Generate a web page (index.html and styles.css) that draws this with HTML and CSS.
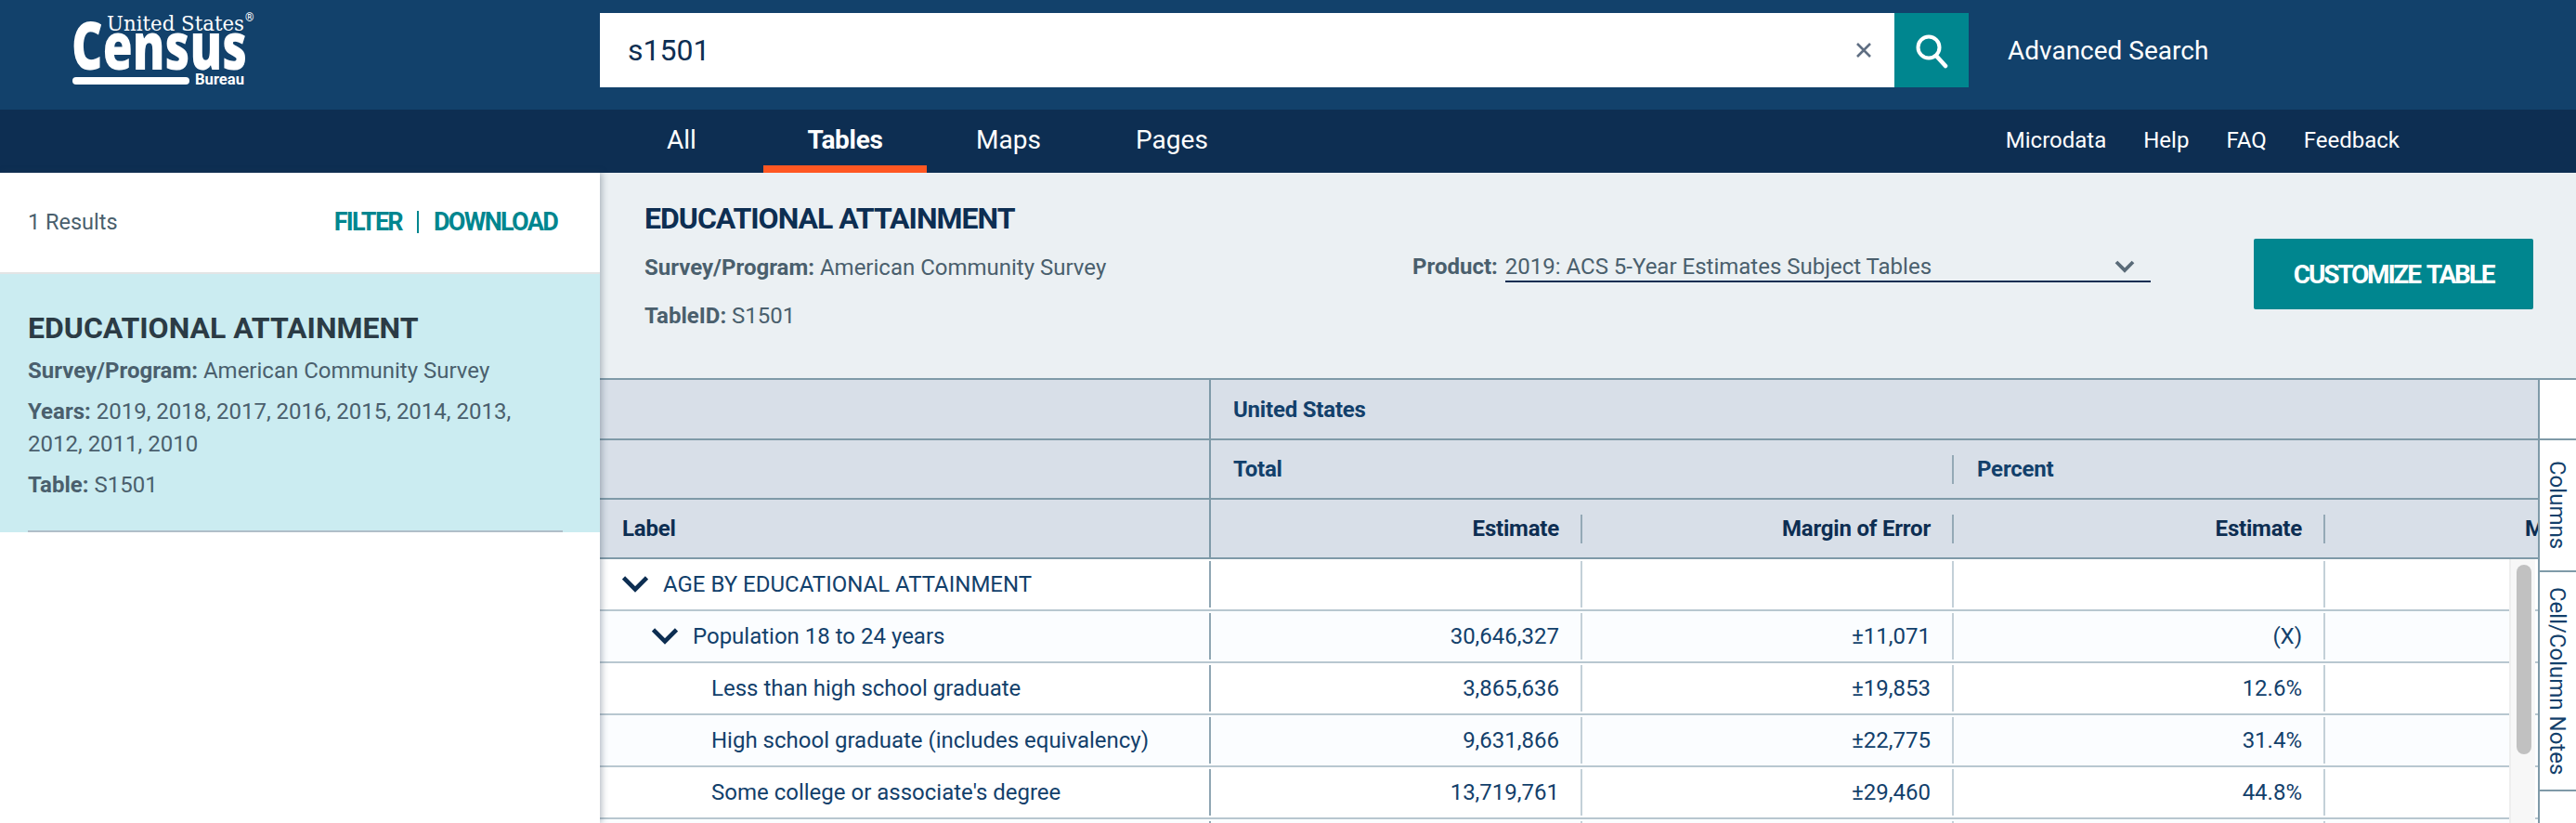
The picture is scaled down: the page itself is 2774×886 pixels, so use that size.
FILE: index.html
```html
<!DOCTYPE html>
<html>
<head>
    <title>Census Tables</title>
    <link rel="stylesheet" href="styles.css">
</head>
<body>
    <header class="top-bar">
        <a class="logo">
            <svg width="210" height="96" viewBox="0 0 210 96">
                <text x="37" y="33" class="logo-states" textLength="148" lengthAdjust="spacingAndGlyphs">United States</text>
                <text x="186" y="23" class="logo-reg">®</text>
                <text x="-1" y="75" class="logo-census" textLength="189" lengthAdjust="spacingAndGlyphs">Census</text>
                <rect x="0" y="83" width="126" height="8" rx="4" fill="#fff"></rect>
                <text x="132" y="91" class="logo-bureau" textLength="53" lengthAdjust="spacingAndGlyphs">Bureau</text>
            </svg>
        </a>
        <div class="search-box">
            <span class="search-text">s1501</span>
            <svg class="search-clear" width="18" height="18" viewBox="0 0 18 18"><path d="M2 2L16 16M16 2L2 16" stroke="#5f6e82" stroke-width="2.6" fill="none"></path></svg>
        </div>
        <button class="search-btn">
            <svg width="36" height="38" viewBox="0 0 36 38"><circle cx="15" cy="15" r="11.5" stroke="#fff" stroke-width="4" fill="none"></circle><path d="M23 24L33 35" stroke="#fff" stroke-width="4.6" stroke-linecap="round"></path></svg>
        </button>
        <a class="advanced">Advanced Search</a>
    </header>

    <nav class="nav-bar">
        <div class="tabs">
            <a class="tab">All</a>
            <a class="tab active">Tables</a>
            <a class="tab">Maps</a>
            <a class="tab">Pages</a>
        </div>
        <div class="nav-links">
            <a>Microdata</a>
            <a>Help</a>
            <a>FAQ</a>
            <a>Feedback</a>
        </div>
    </nav>

    <div class="layout">
        <aside class="sidebar">
            <div class="results-row">
                <span class="results-count">1 Results</span>
                <div class="results-actions">
                    <a>FILTER</a>
                    <span class="action-sep"></span>
                    <a>DOWNLOAD</a>
                </div>
            </div>
            <div class="result-card">
                <h2>EDUCATIONAL ATTAINMENT</h2>
                <p><b>Survey/Program:</b> American Community Survey</p>
                <p><b>Years:</b> 2019, 2018, 2017, 2016, 2015, 2014, 2013, 2012, 2011, 2010</p>
                <p><b>Table:</b> S1501</p>
            </div>
        </aside>

        <main class="content">
            <section class="table-info">
                <div class="info-left">
                    <h1>EDUCATIONAL ATTAINMENT</h1>
                    <p><b>Survey/Program:</b> American Community Survey</p>
                    <p><b>TableID:</b> S1501</p>
                </div>
                <div class="product">
                    <b>Product:</b>
                    <div class="product-select">
                        <span>2019: ACS 5-Year Estimates Subject Tables</span>
                        <svg width="22" height="14" viewBox="0 0 22 14"><path d="M2 2L11 11L20 2" stroke="#5a6b78" stroke-width="3.8" fill="none"></path></svg>
                    </div>
                </div>
                <button class="customize">CUSTOMIZE TABLE</button>
            </section>

            <section class="table-area">
                <div class="table-wrap">
                    <table class="data-table">
                        <colgroup>
                            <col class="col-label">
                            <col class="col-num">
                            <col class="col-num">
                            <col class="col-num">
                            <col class="col-num">
                        </colgroup>
                        <thead>
                            <tr class="head-geo">
                                <th class="head-first"></th>
                                <th colspan="4" class="head-group">United States</th>
                            </tr>
                            <tr class="head-sub">
                                <th class="head-first"></th>
                                <th colspan="2" class="head-group">Total</th>
                                <th colspan="2" class="head-percent"><div>Percent</div></th>
                            </tr>
                            <tr class="head-cols">
                                <th class="head-first head-label">Label</th>
                                <th class="head-num"><div>Estimate</div></th>
                                <th class="head-num"><div>Margin of Error</div></th>
                                <th class="head-num"><div>Estimate</div></th>
                                <th class="head-num"><div>Margin of Error</div></th>
                            </tr>
                        </thead>
                        <tbody>
                            <tr>
                                <td class="row-label level-0">
                                    <svg width="28" height="18" viewBox="0 0 28 18"><path d="M1.5 2L14 14.5L26.5 2" stroke="#0d2e52" stroke-width="4.6" fill="none"></path></svg>
                                    AGE BY EDUCATIONAL ATTAINMENT
                                </td>
                                <td></td><td></td><td></td><td></td>
                            </tr>
                            <tr>
                                <td class="row-label level-1">
                                    <svg width="28" height="18" viewBox="0 0 28 18"><path d="M1.5 2L14 14.5L26.5 2" stroke="#0d2e52" stroke-width="4.6" fill="none"></path></svg>
                                    Population 18 to 24 years
                                </td>
                                <td>30,646,327</td><td>±11,071</td><td>(X)</td><td></td>
                            </tr>
                            <tr>
                                <td class="row-label level-2">Less than high school graduate</td>
                                <td>3,865,636</td><td>±19,853</td><td>12.6%</td><td></td>
                            </tr>
                            <tr>
                                <td class="row-label level-2">High school graduate (includes equivalency)</td>
                                <td>9,631,866</td><td>±22,775</td><td>31.4%</td><td></td>
                            </tr>
                            <tr>
                                <td class="row-label level-2">Some college or associate's degree</td>
                                <td>13,719,761</td><td>±29,460</td><td>44.8%</td><td></td>
                            </tr>
                            <tr>
                                <td class="row-label level-2"></td>
                                <td></td><td></td><td></td><td></td>
                            </tr>
                        </tbody>
                    </table>
                    <div class="scroll-track"><div class="scroll-thumb"></div></div>
                </div>
                <div class="side-tabs">
                    <div class="side-blank"></div>
                    <div class="side-tab tab-columns"><span>Columns</span></div>
                    <div class="side-tab tab-notes"><span>Cell/Column Notes</span></div>
                </div>
            </section>
        </main>
    </div>
</body>
</html>
```

FILE: styles.css
```css
* {
    box-sizing: border-box;
}

html, body {
    margin: 0;
    height: 886px;
    overflow: hidden;
}

body {
    font-family: Roboto, sans-serif;
    background-color: #fff;
    color: #12406b;
}

h1, h2, p {
    margin: 0;
}

/* top bar */
.top-bar {
    height: 118px;
    background-color: #12416b;
    display: flex;
    align-items: flex-start;
    padding-left: 78px;
}

.logo {
    width: 568px;
    height: 96px;
}

.logo svg {
    overflow: visible;
}

.logo text {
    fill: #fff;
}

.logo-states {
    font-family: "DejaVu Serif", serif;
    font-size: 23px;
}

.logo-reg {
    font-family: Roboto, sans-serif;
    font-size: 12px;
}

.logo-census {
    font-family: "Open Sans", sans-serif;
    font-weight: 800;
    font-size: 70px;
}

.logo-bureau {
    font-family: Roboto, sans-serif;
    font-weight: 700;
    font-size: 16px;
}

.search-box {
    margin-top: 14px;
    width: 1394px;
    height: 80px;
    background-color: #fff;
    display: flex;
    align-items: center;
    justify-content: space-between;
    padding: 0 24px 0 30px;
}

.search-text {
    font-size: 32px;
    color: #0d2e52;
}

.search-btn {
    margin-top: 14px;
    width: 80px;
    height: 80px;
    background-color: #00868f;
    border: none;
    padding: 2px 0 0;
    display: flex;
    align-items: center;
    justify-content: center;
}

.advanced {
    margin: 15px 0 0 42px;
    line-height: 80px;
    font-size: 28px;
    color: #fff;
}

/* nav */
.nav-bar {
    height: 68px;
    background-color: #0d2e52;
    display: flex;
    justify-content: space-between;
    padding: 0 190px 0 646px;
}

.tabs {
    display: flex;
}

.tab {
    width: 176px;
    text-align: center;
    line-height: 65px;
    font-size: 28px;
    color: #fff;
}

.tab.active {
    font-weight: 700;
    letter-spacing: -0.3px;
    box-shadow: inset 0 -8px #ff5722;
}

.nav-links {
    display: flex;
    gap: 40px;
    font-size: 24px;
    line-height: 66px;
    color: #fff;
}

/* layout */
.layout {
    display: flex;
    height: 700px;
}

.sidebar {
    width: 646px;
    flex-shrink: 0;
    background-color: #fff;
    box-shadow: 2px 0 7px rgba(40, 60, 80, 0.35);
    position: relative;
    z-index: 2;
}

.results-row {
    height: 107px;
    padding: 0 46px 2px 30px;
    display: flex;
    align-items: center;
    justify-content: space-between;
}

.results-count {
    font-size: 23.5px;
    color: #4a5f6d;
}

.results-actions {
    display: flex;
    align-items: center;
    gap: 16px;
    font-size: 27px;
    font-weight: 700;
    letter-spacing: -1.7px;
    color: #00868f;
}

.action-sep {
    width: 2px;
    height: 24px;
    background-color: #00868f;
}

.result-card {
    height: 280px;
    background-color: #cbecf1;
    border-top: 2px solid #e2e4e5;
    padding: 39px 40px 0 30px;
    position: relative;
    font-size: 24px;
    line-height: 35px;
    color: #4a5f6d;
}

.result-card::after {
    content: "";
    position: absolute;
    left: 30px;
    right: 40px;
    bottom: 0;
    height: 2px;
    background-color: #b0bec8;
}

.result-card h2 {
    font-size: 32px;
    font-weight: 700;
    line-height: 38px;
    color: #2b3b45;
    margin-bottom: 10px;
}

.result-card p {
    margin-bottom: 9px;
}

.content {
    flex: 1;
    min-width: 0;
    display: flex;
    flex-direction: column;
}

/* table info */
.table-info {
    height: 221px;
    background-color: #ebf0f3;
    display: flex;
    align-items: flex-start;
    padding: 0 46px 0 48px;
}

.info-left {
    width: 827px;
    padding-top: 30px;
    font-size: 24px;
    line-height: 35px;
    color: #4a5f6d;
}

.info-left h1 {
    font-size: 32px;
    font-weight: 700;
    letter-spacing: -1px;
    line-height: 38px;
    color: #0d2e52;
    margin-bottom: 17px;
}

.info-left p {
    margin-bottom: 17px;
}

.product {
    width: 795px;
    margin-top: 83px;
    display: flex;
    align-items: center;
    gap: 8px;
    font-size: 24px;
    color: #4a5f6d;
}

.product-select {
    flex: 1;
    height: 35px;
    padding: 2px 17px 0 0;
    border-bottom: 2px solid #0d2e52;
    display: flex;
    align-items: center;
    justify-content: space-between;
    color: #4a5f6d;
}

.customize {
    margin: 71px 0 0 111px;
    width: 301px;
    height: 76px;
    padding-top: 2px;
    border: none;
    border-radius: 2px;
    background-color: #00868f;
    color: #fff;
    font-family: Roboto, sans-serif;
    font-size: 28px;
    font-weight: 700;
    letter-spacing: -2.2px;
    word-spacing: 3px;
}

/* table */
.table-area {
    flex: 1;
    display: flex;
    min-height: 0;
    background-color: #fff;
}

.table-wrap {
    flex: 1;
    min-width: 0;
    overflow: hidden;
    position: relative;
    border-top: 2px solid #7f9aa8;
}

.data-table {
    table-layout: fixed;
    width: 2258px;
    border-collapse: separate;
    border-spacing: 0;
    font-size: 24px;
}

.col-label {
    width: 658px;
}

.col-num {
    width: 400px;
}

.data-table thead th {
    background-color: #d8dfe8;
    padding: 0;
    font-size: 24px;
    font-weight: 700;
    letter-spacing: -0.2px;
    text-align: left;
    color: #0d2e52;
    border-bottom: 2px solid #7f9aa8;
}

.head-geo th {
    height: 65px;
}

.head-sub th, .head-cols th {
    height: 64px;
}

.data-table thead th.head-first {
    border-right: 2px solid #7f9aa8;
}

.data-table thead th.head-group {
    padding-left: 24px;
    color: #12406b;
}

.head-percent div {
    margin-left: -2px;
    border-left: 2px solid #94a9b6;
    padding-left: 25px;
    line-height: 31px;
    color: #12406b;
}

.data-table thead th.head-label {
    padding-left: 24px;
}

.data-table thead th.head-num {
    text-align: right;
}

.head-num div {
    border-right: 2px solid #94a9b6;
    padding-right: 23px;
    line-height: 31px;
}

.data-table td {
    height: 56px;
    padding: 0 25px 0 0;
    text-align: right;
    color: #12406b;
    border-bottom: 2px solid #b8c7d0;
    background: linear-gradient(#c3d0d8, #c3d0d8) right center / 2px 50px no-repeat #fff;
}

.data-table tbody tr:nth-child(even) td {
    background-color: #fbfdff;
}

.data-table td.row-label {
    text-align: left;
    background-image: linear-gradient(#8fa6b3, #8fa6b3);
}

.row-label svg {
    margin-right: 10px;
    vertical-align: -1px;
}

.data-table td.level-0 {
    padding-left: 24px;
}

.data-table td.level-1 {
    padding-left: 56px;
}

.data-table td.level-2 {
    padding-left: 120px;
}

.scroll-track {
    position: absolute;
    top: 193px;
    right: 3px;
    bottom: 0;
    width: 28px;
    background-color: #f7f7f7;
    border-left: 2px solid #eeeeee;
    padding: 6px 4px 0 6px;
}

.scroll-thumb {
    height: 204px;
    border-radius: 8px;
    background-color: #c1c1c1;
}

.side-tabs {
    width: 41px;
    flex-shrink: 0;
    border-left: 2px solid #7f9aa8;
    border-top: 2px solid #7f9aa8;
    font-size: 24px;
    color: #12406b;
}

.side-blank {
    height: 65px;
    border-bottom: 2px solid #7f9aa8;
}

.side-tab {
    display: flex;
    align-items: center;
    justify-content: center;
    padding-right: 2px;
    border-bottom: 2px solid #7f9aa8;
}

.side-tab span {
    writing-mode: vertical-rl;
}

.tab-columns {
    height: 142px;
}

.tab-notes {
    height: 236px;
}
```
